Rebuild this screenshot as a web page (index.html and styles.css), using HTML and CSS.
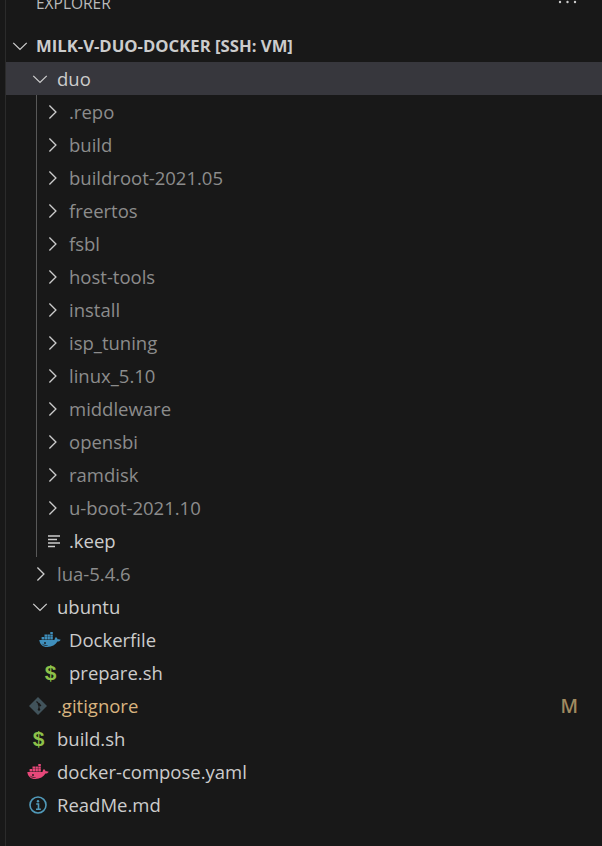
FILE: index.html
```html
<!DOCTYPE html>
<html lang="en">
<head>
<meta charset="utf-8">
<title>Explorer</title>
<link rel="stylesheet" href="styles.css">
</head>
<body>
<svg class="defs" width="0" height="0" aria-hidden="true">
  <symbol id="right" viewBox="0 0 16 16"><path d="M5.700 2.200 11.500 8l-5.800 5.800" fill="none" stroke="currentColor" stroke-width="1.150"/></symbol>
  <symbol id="down" viewBox="0 0 16 16"><path d="M2 5.200 8 11l6-5.800" fill="none" stroke="currentColor" stroke-width="1.150"/></symbol>
  <symbol id="whale" viewBox="0 0 22 15">
    <path fill="currentColor" d="M.3 8H15.400c.2-1.300.8-2.300 1.500-3 .9.700 1.500 1.500 1.700 2.300 1-.3 2.200-.2 3.100.500-.6 1.300-2 1.800-3.300 1.800C16.500 13 13 15 8.300 15 3.400 15 .8 12.300.3 8Z"/>
    <path fill="currentColor" d="M2.600 5.100h2.500v2.400H2.600zM5.500 5.100H8v2.400H5.500zM8.400 5.100h2.500v2.400H8.400zM11.300 5.100h2.500v2.400h-2.500zM5.500 2.400H8v2.300H5.500zM8.400 2.400h2.500v2.300H8.400zM11.300 2.400h2.500v2.300h-2.500zM11.300 0h2.500v2H11.300z"/>
    <circle cx="6" cy="11" r=".9" fill="#181818"/>
    <path d="M3.500 12.300c1.500 1 3.500 1.400 5 1.200" fill="none" stroke="#181818" stroke-width=".7"/>
  </symbol>
</svg>
<main class="sidebar">
  <header class="title-bar">
    <span class="title">EXPLORER</span>
    <svg class="more" width="20" height="4" viewBox="0 0 20 4" aria-hidden="true"><circle cx="2" cy="2" r="1.200"/><circle cx="9.500" cy="2" r="1.200"/><circle cx="17" cy="2" r="1.200"/></svg>
  </header>

  <div class="row root">
    <svg class="chev"><use href="#down"/></svg><span class="label">MILK-V-DUO-DOCKER [SSH: VM]</span>
  </div>

  <div class="row d1 folder active">
    <svg class="chev"><use href="#down"/></svg><span class="label">duo</span>
  </div>
  <div class="children">
    <div class="row d2 folder dim"><svg class="chev"><use href="#right"/></svg><span class="label">.repo</span></div>
    <div class="row d2 folder dim"><svg class="chev"><use href="#right"/></svg><span class="label">build</span></div>
    <div class="row d2 folder dim"><svg class="chev"><use href="#right"/></svg><span class="label">buildroot-2021.05</span></div>
    <div class="row d2 folder dim"><svg class="chev"><use href="#right"/></svg><span class="label">freertos</span></div>
    <div class="row d2 folder dim"><svg class="chev"><use href="#right"/></svg><span class="label">fsbl</span></div>
    <div class="row d2 folder dim"><svg class="chev"><use href="#right"/></svg><span class="label">host-tools</span></div>
    <div class="row d2 folder dim"><svg class="chev"><use href="#right"/></svg><span class="label">install</span></div>
    <div class="row d2 folder dim"><svg class="chev"><use href="#right"/></svg><span class="label">isp_tuning</span></div>
    <div class="row d2 folder dim"><svg class="chev"><use href="#right"/></svg><span class="label">linux_5.10</span></div>
    <div class="row d2 folder dim"><svg class="chev"><use href="#right"/></svg><span class="label">middleware</span></div>
    <div class="row d2 folder dim"><svg class="chev"><use href="#right"/></svg><span class="label">opensbi</span></div>
    <div class="row d2 folder dim"><svg class="chev"><use href="#right"/></svg><span class="label">ramdisk</span></div>
    <div class="row d2 folder dim"><svg class="chev"><use href="#right"/></svg><span class="label">u-boot-2021.10</span></div>
    <div class="row d2 file">
      <span class="icon"><svg class="lines" width="14" height="14" viewBox="0 0 14 14" aria-hidden="true"><path d="M1 2h12M1 5.500h9M1 9h12M1 12.500h7"/></svg></span><span class="label">.keep</span>
    </div>
  </div>

  <div class="row d1 folder dim"><svg class="chev"><use href="#right"/></svg><span class="label">lua-5.4.6</span></div>

  <div class="row d1 folder"><svg class="chev"><use href="#down"/></svg><span class="label">ubuntu</span></div>
  <div class="children plain">
    <div class="row d2 file"><span class="icon"><svg class="whale blue"><use href="#whale"/></svg></span><span class="label">Dockerfile</span></div>
    <div class="row d2 file"><span class="icon"><span class="dollar">$</span></span><span class="label">prepare.sh</span></div>
  </div>

  <div class="row d1 file modified">
    <span class="icon"><svg width="18" height="18" viewBox="0 0 18 18" aria-hidden="true"><path class="git" d="M9 0 18 9 9 18 0 9Z"/><path class="git-cut" d="M7.500 4.500 10 7v6M10 7l2 2" /><circle class="git-dot" cx="10" cy="7.500" r="1.200"/><circle class="git-dot" cx="10" cy="12.500" r="1.200"/></svg></span><span class="label">.gitignore</span>
    <span class="badge">M</span>
  </div>
  <div class="row d1 file"><span class="icon"><span class="dollar">$</span></span><span class="label">build.sh</span></div>
  <div class="row d1 file"><span class="icon"><svg class="whale pink"><use href="#whale"/></svg></span><span class="label">docker-compose.yaml</span></div>
  <div class="row d1 file">
    <span class="icon"><svg width="18" height="18" viewBox="0 0 18 18" aria-hidden="true"><circle class="info-ring" cx="9" cy="9" r="8"/><path class="info-i" d="M7.200 8h2.300v5M7 13.300h4.800"/><circle class="info-dot" cx="9" cy="5.300" r="1.200"/></svg></span><span class="label">ReadMe.md</span>
  </div>
</main>
</body>
</html>
```
FILE: styles.css
```css
* { box-sizing: border-box; }
html, body { margin: 0; padding: 0; background: #181818; }
body { height: 846px; overflow: hidden; font-family: "Open Sans", "Noto Sans", sans-serif; font-size: 18.5px; color: #cccccc; }
.defs { display: block; height: 0; }
.sidebar { margin-left: 5px; border-left: 1px solid #2b2b2b; height: 846px; overflow: hidden; }

.title-bar { height: 29px; display: flex; justify-content: space-between; overflow: hidden; padding-left: 30px; padding-right: 24px; }
.title { font-size: 15.500px; line-height: 20px; margin-top: -7px; color: #bbbbbb; }
.more { fill: #cccccc; }

.row { height: 33px; display: flex; align-items: center; white-space: nowrap; }
.label { line-height: 33px; }
.chev { width: 18px; height: 18px; margin: 0 8px 0 3px; flex: none; color: #cccccc; }
.icon { width: 24px; height: 33px; margin-right: 7px; flex: none; display: flex; align-items: center; justify-content: center; }

.root { padding-left: 2px; font-weight: 700; font-size: 16.700px; }
.root .chev { margin-right: 7px; margin-left: 3px; }
.d1.folder { padding-left: 22px; }
.d1.file { padding-left: 20px; }
.d2.folder { padding-left: 3px; }
.d2.file { padding-left: 1px; }
.active { background: #37373d; }
.dim .label { color: #8c8c8c; }

.children { margin-left: 30px; border-left: 1px solid #585858; }
.children.plain { border-left-color: transparent; }

.lines { stroke: #cccccc; stroke-width: 1.500; fill: none; margin-left: 7px; }
.whale { width: 22px; height: 15px; flex: none; }
.blue { color: #3f8fbc; }
.pink { color: #e8487a; }
.dollar { font-family: "Liberation Sans", sans-serif; font-weight: 700; font-size: 21px; color: #8dc149; line-height: 33px; margin-left: 1px; }
.git { fill: #41535b; }
.git-cut { fill: none; stroke: #181818; stroke-width: 1.100; }
.git-dot { fill: #181818; }
.info-ring { fill: none; stroke: #519aba; stroke-width: 1.600; }
.info-i { fill: none; stroke: #519aba; stroke-width: 1.600; }
.info-dot { fill: #519aba; }

.modified .label { color: #d9b47f; }
.badge { margin-left: auto; margin-right: 24px; color: #a08a60; font-weight: 600; font-size: 19px; }
```
